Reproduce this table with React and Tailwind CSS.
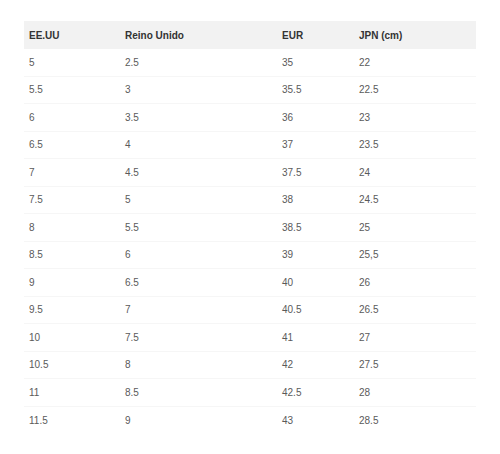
export default function App() {
  const rows = [
    ["5", "2.5", "35", "22"],
    ["5.5", "3", "35.5", "22.5"],
    ["6", "3.5", "36", "23"],
    ["6.5", "4", "37", "23.5"],
    ["7", "4.5", "37.5", "24"],
    ["7.5", "5", "38", "24.5"],
    ["8", "5.5", "38.5", "25"],
    ["8.5", "6", "39", "25,5"],
    ["9", "6.5", "40", "26"],
    ["9.5", "7", "40.5", "26.5"],
    ["10", "7.5", "41", "27"],
    ["10.5", "8", "42", "27.5"],
    ["11", "8.5", "42.5", "28"],
    ["11.5", "9", "43", "28.5"],
  ];
  const cols = "grid grid-cols-[95px_157px_77px_123px]";
  return (
    <div className="w-[500px] h-[454px] bg-white pt-[21px] px-[24px]" style={{ fontFamily: '"Liberation Sans", Arial, sans-serif' }}>
      <div className={`${cols} h-[28px] items-center bg-[#f2f2f2] text-[10px] font-bold text-[#333]`}>
        <div className="pl-[5px]">EE.UU</div>
        <div className="pl-[6px]">Reino Unido</div>
        <div className="pl-[6px]">EUR</div>
        <div className="pl-[6px]">JPN (cm)</div>
      </div>
      {rows.map((r, i) => (
        <div key={i} className={`${cols} h-[27.5px] items-center text-[10px] text-[#5a5a5a] ${i < rows.length - 1 ? "border-b border-[#f6f6f6]" : ""}`}>
          <div className="pl-[5px]">{r[0]}</div>
          <div className="pl-[6px]">{r[1]}</div>
          <div className="pl-[6px]">{r[2]}</div>
          <div className="pl-[6px]">{r[3]}</div>
        </div>
      ))}
    </div>
  );
}
